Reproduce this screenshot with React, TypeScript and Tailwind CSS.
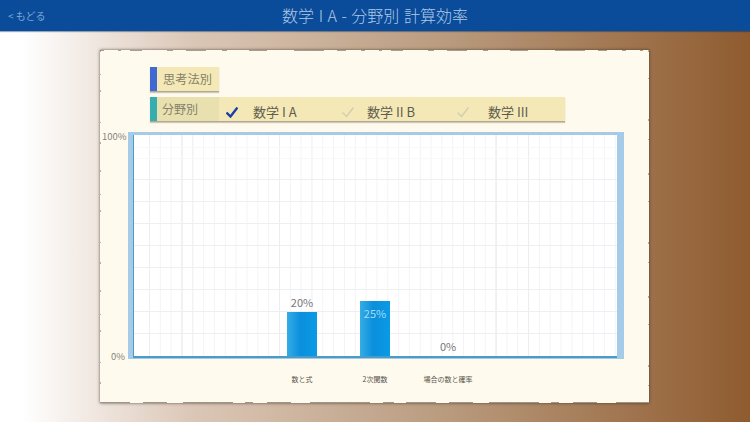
const jp = "font-['Noto_Sans_CJK_JP','Noto_Sans',sans-serif]";

const vLines = Array.from({ length: 44 }, (_, i) => 15.5 + i * 10.83);
const hLines = [12.5, 23.5, 44.5, 66.5, 88.5, 110.5, 132.5, 154.5, 176.5, 198.5];
const strongV = [3, 32];
const midV = [0, 4, 12, 15, 35];

const bars = [
  { label: "数と式", pct: "20%", height: "h-[44px]", inside: false },
  { label: "2次関数", pct: "25%", height: "h-[55px]", inside: true },
  { label: "場合の数と確率", pct: "0%", height: "h-0", inside: false },
];

function Check({ on }: { on?: boolean }) {
  return (
    <svg width="12" height="11" viewBox="0 0 12 11" fill="none">
      <path
        d="M0.5 5.5 L4.5 9.5 L11.5 0.5"
        stroke={on ? "#1a3fa8" : "#cfcdb0"}
        strokeWidth={on ? 2.4 : 1.3}
      />
    </svg>
  );
}

function ChartGrid() {
  return (
    <svg className="absolute inset-0 h-full w-full">
      {vLines.map((x, i) => (
        <line
          key={x}
          x1={x}
          x2={x}
          y1="0"
          y2="221"
          stroke={strongV.includes(i) ? "#e4e3e8" : midV.includes(i) ? "#edecf0" : "#f4f3f7"}
        />
      ))}
      {hLines.map((y, i) => (
        <line key={y} x1="0" x2="484" y1={y} y2={y} stroke={i < 2 ? "#f9f7f8" : "#efeef1"} />
      ))}
    </svg>
  );
}

// worn edge of the paper: dark specks along the rim
function RoughEdge() {
  return (
    <svg className="pointer-events-none absolute inset-0 h-full w-full" fill="none">
      <path d="M0 0.5 H549" stroke="#5c5247" strokeOpacity="0.55" strokeDasharray="4 14 3 9 12 25 6 13 20 16 5 22 18 27 30 13 9 15" />
      <path d="M0 352.5 H549" stroke="#5c5247" strokeOpacity="0.6" strokeDasharray="30 13 24 16 50 12 8 14 24 19 60 13 11 12" />
      <path d="M0.5 0 V353" stroke="#6e6458" strokeOpacity="0.5" strokeDasharray="2 22 1 15 2 30 1 19 2 26" />
      <path d="M548.5 0 V353" stroke="#6e5c4a" strokeOpacity="0.5" strokeDasharray="2 26 1 40 2 18 1 33" />
    </svg>
  );
}

export default function App() {
  return (
    <div className={`flex h-[422px] w-[750px] flex-col overflow-hidden ${jp}`}>
      {/* header */}
      <div className="relative flex h-[31px] items-center justify-center bg-[#0a4c9a] shadow-[0_1px_1px_rgba(0,40,90,0.4)]">
        <span className="absolute left-[8px] top-[9px] text-[10px] leading-[13px] text-[#7ea6d2]">&lt; もどる</span>
        <span className="text-[16px] font-light leading-[31px] text-[#b0c9e4] [word-spacing:1px]">数学 I A - 分野別 計算効率</span>
      </div>

      {/* board */}
      <div className="flex flex-1 bg-[linear-gradient(90deg,#ffffff_3%,#dcc8b8_25%,#b99a7d_60%,#8f5b2f_100%)] pl-[100px] pt-[19px]">
        <div className="relative flex h-[353px] w-[549px] flex-col bg-[#fffaee] pl-[28px] pt-[17px] shadow-[0_0_3px_rgba(50,40,30,0.75)]">
          <RoughEdge />

          {/* tabs */}
          <div className="ml-[22px] flex h-[25px] w-[69px] border-b border-[#b0aa92] bg-[#f4e9b6] shadow-[0_1px_1px_rgba(120,110,90,0.35)]">
            <div className="w-[7px] bg-[#4169d2]" />
            <span className="pl-[6px] text-[12.25px] leading-[25px] text-[#85816a]">思考法別</span>
          </div>
          <div className="ml-[22px] mt-[5px] flex h-[25px] w-[415px] border-b border-[#b0aa92] bg-[#f4e9b6] shadow-[0_1px_1px_rgba(120,110,90,0.35)]">
            <div className="w-[7px] bg-[#36aeb0]" />
            <span className="w-[62px] bg-[#e9e0b0] pl-[5px] text-[12px] leading-[23px] text-[#85816a]">分野別</span>
            <div className="flex w-[123px] items-center pl-[7px] pt-[6px]">
              <Check on />
              <span className="ml-[15px] text-[13px] text-[#605d50]">数学 I A</span>
            </div>
            <div className="flex w-[115px] items-center pt-[6px]">
              <Check />
              <span className="ml-[13px] text-[13px] text-[#605d50]">数学 II B</span>
            </div>
            <div className="flex items-center pt-[6px]">
              <Check />
              <span className="ml-[19px] text-[13px] text-[#605d50]">数学 III</span>
            </div>
          </div>

          {/* chart */}
          <div className="relative mt-[10px] h-[227px] w-[496px] border-b-[1px] border-l-[5px] border-r-[7px] border-t-[3px] border-[#a5cbe8]">
            <span className="absolute left-[-31px] top-[-5px] text-[9.5px] leading-[12px] text-[#85837a]">100%</span>
            <span className="absolute left-[-22px] bottom-[-4px] text-[9.5px] leading-[12px] text-[#85837a]">0%</span>
            <div className="relative h-full border-b-2 border-l border-[#4a9cc8] bg-white">
              <ChartGrid />
              <div className="relative flex h-full items-end pl-[153px]">
                {bars.map((b) => (
                  <div key={b.label} className="relative mr-[43px] w-[30px]">
                    <div className={`relative w-[30px] ${b.height} bg-[linear-gradient(90deg,#35ace6,#0a8fdc_45%,#0a9ae6)]`}>
                      <span className={`absolute left-[-5px] w-[40px] text-center text-[11px] leading-[14px] ${b.inside ? "top-[5px] text-[#a6dcf5]" : "top-[-17px] text-[#777777]"}`}>
                        {b.pct}
                      </span>
                    </div>
                    <span className="absolute bottom-[-28px] left-[-35px] w-[100px] text-center text-[7px] leading-[10px] text-[#55534a]">
                      {b.label}
                    </span>
                  </div>
                ))}
              </div>
            </div>
          </div>
        </div>
      </div>
    </div>
  );
}
